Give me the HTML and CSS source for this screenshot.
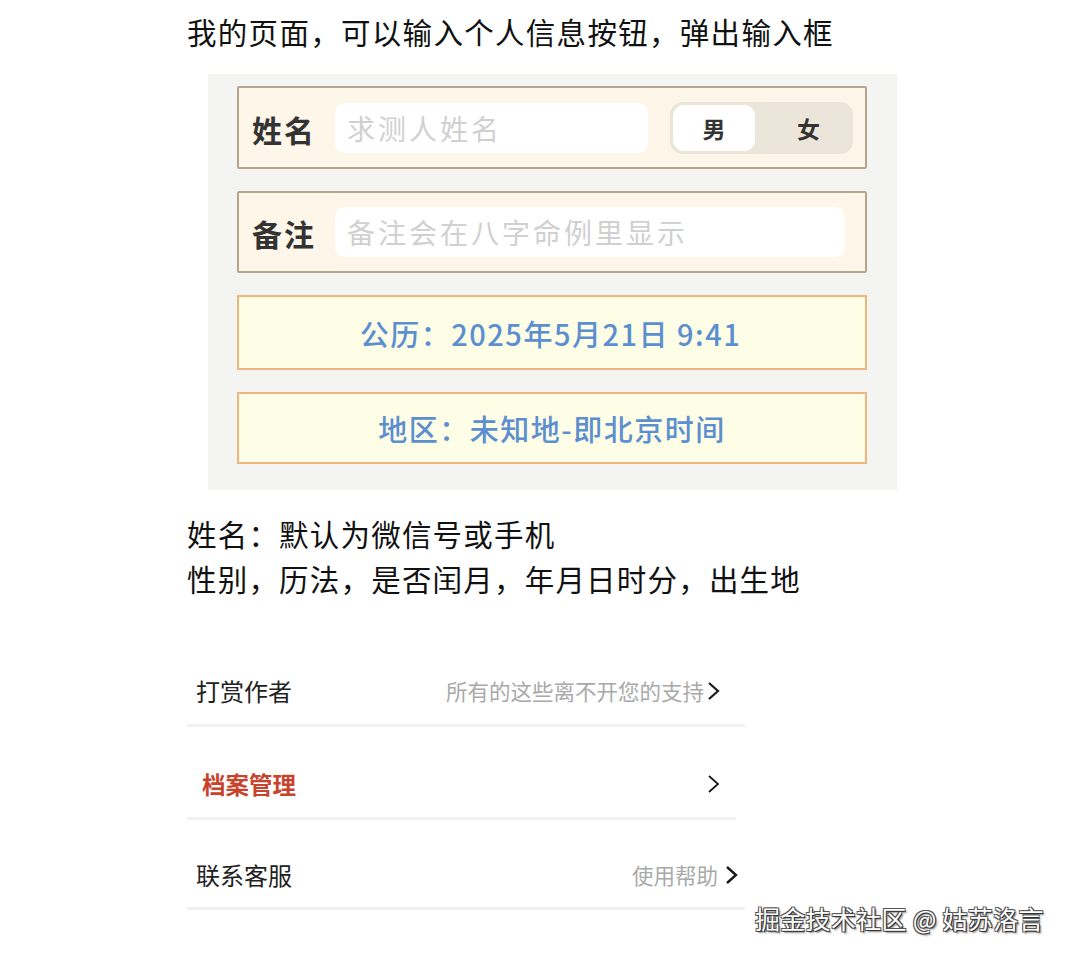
FILE: index.html
```html
<!DOCTYPE html>
<html lang="zh-CN">
<head>
<meta charset="utf-8">
<title>我的页面</title>
<link rel="stylesheet" href="styles.css">
</head>
<body>
<div class="page">
  <h1 class="title">我的页面，可以输入个人信息按钮，弹出输入框</h1>

  <div class="panel">
    <div class="field">
      <span class="field-label">姓名</span>
      <div class="field-input field-input--name">求测人姓名</div>
      <div class="toggle">
        <span class="toggle-item toggle-item--active">男</span>
        <span class="toggle-item">女</span>
      </div>
    </div>
    <div class="field">
      <span class="field-label">备注</span>
      <div class="field-input">备注会在八字命例里显示</div>
    </div>
    <div class="info info--date">公历：2025年5月21日 9:41</div>
    <div class="info info--area">地区：未知地-即北京时间</div>
  </div>

  <div class="notes">
    <p>姓名：默认为微信号或手机</p>
    <p>性别，历法，是否闰月，年月日时分，出生地</p>
  </div>

  <div class="menu">
    <div class="row row--reward">
      <span class="row-label">打赏作者</span>
      <span class="row-extra">所有的这些离不开您的支持</span>
      <svg class="chev" width="13" height="20" viewBox="0 0 13 20"><path d="M2 2 L11 10 L2 18" fill="none" stroke="#1a1a1a" stroke-width="2.2"/></svg>
    </div>
    <div class="row row--archive">
      <span class="row-label row-label--red">档案管理</span>
      <span class="row-extra"></span>
      <svg class="chev" width="13" height="20" viewBox="0 0 13 20"><path d="M2 2 L11 10 L2 18" fill="none" stroke="#1a1a1a" stroke-width="1.8"/></svg>
    </div>
    <div class="row row--service">
      <span class="row-label">联系客服</span>
      <span class="row-extra">使用帮助</span>
      <svg class="chev" width="13" height="20" viewBox="0 0 13 20"><path d="M2 2 L11 10 L2 18" fill="none" stroke="#1a1a1a" stroke-width="2.4"/></svg>
    </div>
  </div>

  <div class="watermark">掘金技术社区 @ 姑苏洛言</div>
</div>
</body>
</html>
```

FILE: styles.css
```css
* { box-sizing: border-box; }
html, body {
  margin: 0;
  padding: 0;
  background: #ffffff;
}
body {
  font-family: "Noto Sans CJK SC", "Noto Sans", sans-serif;
  color: #111;
}
.page {
  position: relative;
  width: 1066px;
  height: 960px;
  padding-left: 187px;
  padding-top: 11px;
}
.title {
  margin: 0;
  font-size: 29.5px;
  font-weight: 400;
  line-height: 40px;
  letter-spacing: 1.3px;
  color: #111;
}
.panel {
  margin-top: 23px;
  margin-left: 21px;
  width: 689px;
  height: 416px;
  background: #f4f4f3;
  padding: 12px 30px 0 29px;
  display: flex;
  flex-direction: column;
  gap: 22px;
}
.field {
  height: 83px;
  background: #fdf6e9;
  border: 2px solid #b6a48c;
  border-radius: 2px;
  display: flex;
  align-items: center;
  padding: 0 12px 0 13px;
}
.field + .field { height: 82px; padding-right: 20px; }
.field-label {
  font-size: 30px;
  font-weight: 700;
  color: #333;
  width: 83px;
  flex: none;
  line-height: 40px;
  margin-top: 2px;
  letter-spacing: 2px;
}
.field-input {
  flex: 1;
  height: 50px;
  background: #ffffff;
  border-radius: 10px;
  padding-left: 12px;
  font-size: 28px;
  line-height: 50px;
  color: #d0d0d0;
  letter-spacing: 3px;
}
.field-input--name {
  flex: none;
  width: 313px;
  margin-right: 22px;
}
.toggle {
  width: 183px;
  height: 52px;
  background: #ebe5da;
  border-radius: 13px;
  padding: 3px;
  display: flex;
}
.toggle-item {
  flex: 1;
  display: flex;
  align-items: center;
  justify-content: center;
  font-size: 23px;
  font-weight: 700;
  color: #333;
  padding-left: 12px;
}
.toggle-item--active {
  flex: none;
  width: 82px;
  background: #ffffff;
  border-radius: 11px;
  padding-left: 0;
}
.info {
  background: #fefde6;
  border: 2px solid #f0b57d;
  display: flex;
  align-items: center;
  justify-content: center;
  font-size: 29px;
  font-weight: 500;
  color: #5b8fcf;
  letter-spacing: 1.5px;
  padding-right: 3px;
}
.info--date { height: 75px; }
.info--area { height: 72px; padding-right: 0; }
.notes {
  margin-top: 21px;
}
.notes p {
  margin: 0;
  font-size: 29.5px;
  line-height: 45px;
  letter-spacing: 1.2px;
  color: #111;
}
.menu {
  margin-top: 34px;
  display: flex;
  flex-direction: column;
}
.row {
  width: 558px;
  height: 92px;
  border-bottom: 3px solid #f0f0f0;
  display: flex;
  align-items: center;
  padding: 35px 25px 12px 9px;
}
.row--archive {
  width: 549px;
  padding-left: 15px;
  padding-right: 16px;
  height: 93px;
}
.row--service {
  height: 90px;
  padding-right: 7px;
}
.row-label {
  font-size: 24px;
  color: #222;
  line-height: 38px;
}
.row-label--red {
  color: #c9432c;
  font-weight: 700;
  font-size: 23.5px;
}
.row-extra {
  margin-left: auto;
  font-size: 21.5px;
  color: #a9a9a9;
  margin-right: 3px;
  line-height: 30px;
}
.row--service .row-extra { font-size: 21.5px; margin-right: 7px; }
.chev { flex: none; display: block; }
.watermark {
  position: absolute;
  left: 755px;
  top: 900px;
  font-size: 25px;
  line-height: 36px;
  color: #ffffff;
  letter-spacing: 0.3px;
  text-shadow: 1px 1px 0 #333, -1px -1px 0 #555, 1px -1px 0 #555, -1px 1px 0 #555, 2px 2px 2px rgba(0,0,0,0.5);
}
```
